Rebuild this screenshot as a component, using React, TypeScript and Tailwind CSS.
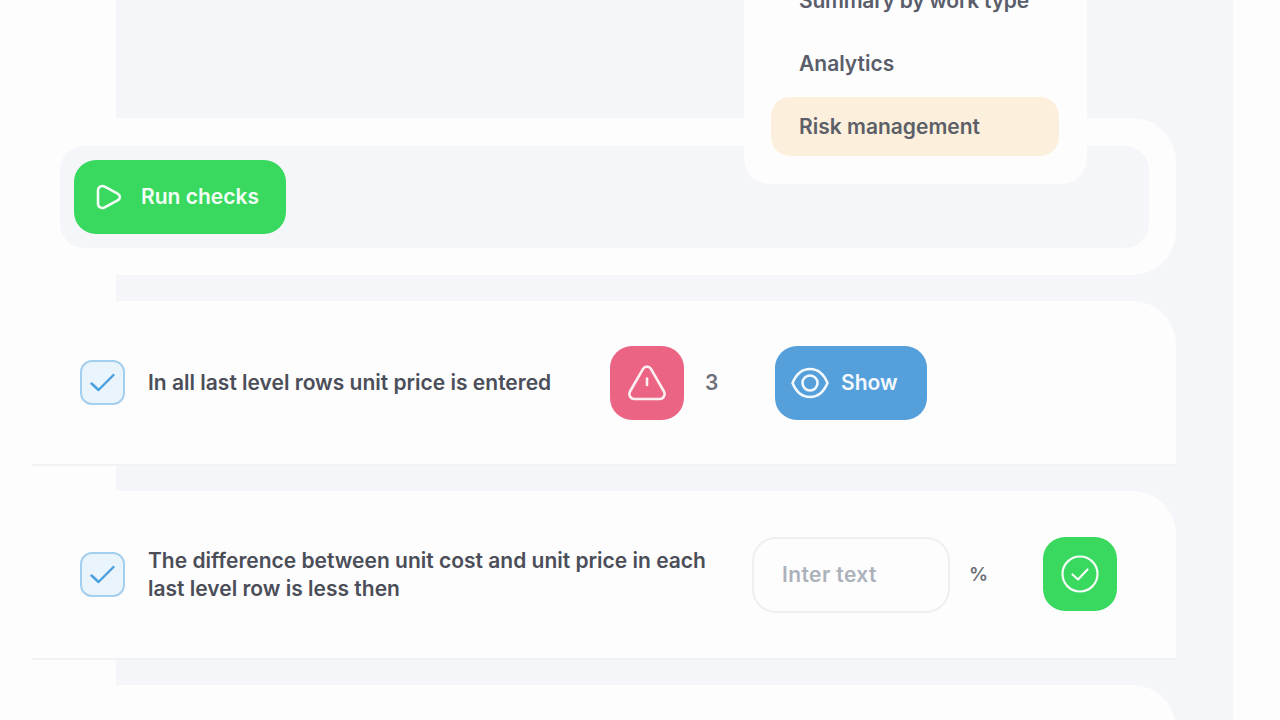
const CheckBox = () => (
  <div className="flex h-[45px] w-[45px] shrink-0 items-center justify-center rounded-[12px] border-2 border-[#a4cfee] bg-[#eaf4fc]">
    <svg width="25" height="21" viewBox="0 0 25 21" fill="none">
      <path d="M1.5 11.5 8.5 18 23.5 3" stroke="#4a9fdf" strokeWidth="2.4" strokeLinecap="round" strokeLinejoin="round" />
    </svg>
  </div>
);

const Divider = () => <div className="ml-[-84px] h-[2px] w-[1144px] shrink-0 bg-[#f1f2f6]" />;

const App = () => {
  return (
    <div className="flex h-[720px] w-[1280px] overflow-hidden bg-[#fdfdfe] font-['Inter',sans-serif] text-[#4b4e58]">
      <main className="relative ml-[116px] flex h-full w-[1117px] flex-col bg-[#f5f6fa]">
        {/* Dropdown menu */}
        <div className="absolute left-[628px] top-[-60px] z-10 flex h-[244px] w-[343px] flex-col justify-end rounded-[26px] bg-[#fdfdfe] pb-[28px] pl-[27px] pr-[28px]">
          <div className="mb-[4px] flex h-[54px] items-center px-[28px] text-[21px] font-semibold leading-none tracking-[-0.25px] text-[#5a5d6a]">
            <span className="whitespace-nowrap">Summary by work type</span>
          </div>
          <div className="flex h-[66px] items-center px-[28px] text-[21px] font-semibold text-[#5a5d6a]">Analytics</div>
          <div className="flex h-[59px] items-center rounded-[19px] bg-[#fcf0dc] px-[28px] pt-[1px] text-[21px] font-semibold text-[#5d5f68]">
            Risk management
          </div>
        </div>

        <div className="h-[118px] shrink-0" />

        {/* Toolbar */}
        <section className="ml-[-116px] h-[157px] w-[1176px] shrink-0 rounded-r-[44px] bg-[#fdfdfe] pt-[28px]">
          <div className="ml-[60px] flex h-[102px] w-[1089px] items-center rounded-[24px] bg-[#f5f6fa] pl-[14px]">
            <button className="flex h-[74px] w-[212px] items-center rounded-[22px] bg-[#38d95e] pl-[22px] text-[21px] font-semibold text-[#f4fdf6]">
              <svg width="26" height="26" viewBox="0 0 26 26" fill="none" className="mr-[19px]">
                <path d="M2 6.5C2 2.8 5.6 1 8.7 2.7L21.6 9.7C24.7 11.4 24.7 14.6 21.6 16.3L8.7 23.3C5.6 25 2 23.2 2 19.5Z" stroke="#f4fdf6" strokeWidth="2.6" strokeLinejoin="round" />
              </svg>
              Run checks
            </button>
          </div>
        </section>

        {/* Rows */}
        <section className="ml-[-116px] mt-[26px] flex h-[163px] w-[1176px] shrink-0 items-center rounded-tr-[44px] bg-[#fdfdfe] pl-[80px]">
          <CheckBox />
          <p className="ml-[23px] w-[462px] shrink-0 text-[21px] font-semibold leading-[28px]">In all last level rows unit price is entered</p>
          <div className="flex h-[74px] w-[74px] shrink-0 items-center justify-center rounded-[22px] bg-[#ec6484]">
            <svg width="40" height="36" viewBox="0 0 40 36" fill="none">
              <path d="M16.2 3.6C17.9 1 22.1 1 23.8 3.6L37 26.5C38.8 29.7 36.6 34 32.8 34H7.2C3.4 34 1.2 29.7 3 26.5Z" stroke="#fdeef1" strokeWidth="2.6" strokeLinejoin="round" />
              <path d="M20 13.5V20" stroke="#fdeef1" strokeWidth="2.6" strokeLinecap="round" />
            </svg>
          </div>
          <span className="ml-[21px] w-[70px] shrink-0 text-[21px] font-semibold text-[#6d7078]">3</span>
          <button className="flex h-[74px] w-[152px] shrink-0 items-center rounded-[22px] bg-[#559fdb] pl-[16px] text-[21px] font-semibold text-[#f3f9fd]">
            <svg width="38" height="32" viewBox="0 0 38 32" fill="none" className="mr-[12px]">
              <path d="M1.5 16C5.5 6.5 12 2 19 2s13.500 4.500 17.500 14C32.500 25.500 26 30 19 30S5.500 25.500 1.500 16Z" stroke="#f3f9fd" strokeWidth="2.6" strokeLinejoin="round" />
              <circle cx="19" cy="16" r="7.500" stroke="#f3f9fd" strokeWidth="2.600" />
            </svg>
            Show
          </button>
        </section>
        <Divider />

        <section className="ml-[-116px] mt-[25px] flex h-[167px] w-[1176px] shrink-0 items-center rounded-tr-[44px] bg-[#fdfdfe] pl-[80px]">
          <CheckBox />
          <div className="ml-[23px] w-[604px] shrink-0">
            <p className="w-[570px] text-[21px] font-semibold leading-[28px]">
              The difference between unit cost and unit price in each last level row is less then
            </p>
          </div>
          <div className="flex h-[76px] w-[198px] shrink-0 items-center rounded-[24px] border-2 border-[#eeeff2] pl-[28px] text-[21px] font-semibold tracking-[0.4px] text-[#acb1ba]">
            Inter text
          </div>
          <span className="ml-[19px] mt-[2px] w-[74px] shrink-0 text-[19px] font-semibold text-[#6d7078]">%</span>
          <button className="mb-[2px] flex h-[74px] w-[74px] shrink-0 items-center justify-center rounded-[22px] bg-[#38d95e]">
            <svg width="38" height="38" viewBox="0 0 38 38" fill="none">
              <circle cx="19" cy="19" r="17.500" stroke="#f4fdf6" strokeWidth="2.200" />
              <path d="M11.500 19.500 17 24.500 26.500 14.500" stroke="#f4fdf6" strokeWidth="2.200" strokeLinecap="round" strokeLinejoin="round" />
            </svg>
          </button>
        </section>
        <Divider />

        <section className="ml-[-116px] mt-[25px] h-[80px] w-[1176px] shrink-0 rounded-tr-[44px] bg-[#fdfdfe]" />
      </main>
    </div>
  );
};

export default App;
